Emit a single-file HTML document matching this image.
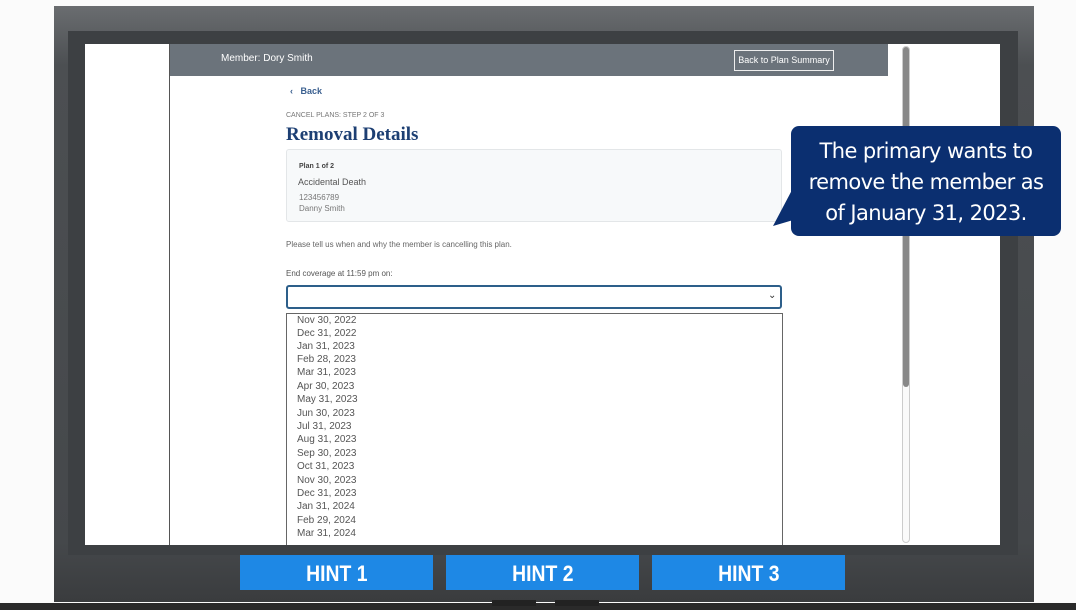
<!DOCTYPE html>
<html><head><style>
*{margin:0;padding:0;box-sizing:border-box}
body{width:1076px;height:610px;overflow:hidden;background:#fbfbfb;font-family:"Liberation Sans",sans-serif;position:relative}
.abs{position:absolute}
.frame{left:54px;top:6px;width:980px;height:596px;background:linear-gradient(#6a6d70,#4c4f52 10%,#45484b 90%,#3a3c3e);}
.bezel{left:68px;top:31px;width:950px;height:524px;background:#3d4043}
.screen{left:85px;top:44px;width:915px;height:501px;background:#fff}
.item{position:absolute;left:297px;font-size:10px;color:#555}
.hint{top:555px;width:193px;height:35px;background:#1e88e5;color:#fff;font-weight:bold;font-size:22px;text-align:center;line-height:37px}
.hint span{display:inline-block;transform:scaleX(.88)}
</style></head><body>
<div class="abs frame"></div>
<div class="abs bezel"></div>
<div class="abs screen"></div>
<div class="abs" style="left:169px;top:44px;width:1px;height:501px;background:#555"></div>
<div class="abs" style="left:170px;top:44px;width:718px;height:32px;background:#6b737b"></div>
<div class="abs" style="left:221px;top:53px;color:#fff;font-size:10px">Member: Dory Smith</div>
<div class="abs" style="left:734px;top:50px;width:100px;height:21px;border:1px solid #eee;color:#fff;font-size:9px;text-align:center;line-height:19px">Back to Plan Summary</div>
<div class="abs" style="left:902px;top:46px;width:8px;height:497px;border:1px solid #ccc;border-radius:4px;background:#fafafa"></div>
<div class="abs" style="left:903px;top:47px;width:6px;height:340px;background:#888;border-radius:3px"></div>
<div class="abs" style="left:290px;top:86px;color:#3a5f8f;font-size:9px;font-weight:bold">‹ &nbsp; Back</div>
<div class="abs" style="left:286px;top:112px;color:#777;font-size:7px">CANCEL PLANS: STEP 2 OF 3</div>
<div class="abs" style="left:286px;top:124px;color:#1d3f73;font-size:19px;font-weight:bold;font-family:'Liberation Serif',serif">Removal Details</div>
<div class="abs" style="left:286px;top:149px;width:496px;height:73px;background:#f7f9fa;border:1px solid #e3e6e8;border-radius:3px"></div>
<div class="abs" style="left:299px;top:163px;font-size:7px;color:#444;font-weight:bold">Plan 1 of 2</div>
<div class="abs" style="left:298px;top:177px;font-size:9px;color:#555">Accidental Death</div>
<div class="abs" style="left:299px;top:193px;font-size:8px;color:#777">123456789</div>
<div class="abs" style="left:299px;top:204px;font-size:8px;color:#777">Danny Smith</div>
<div class="abs" style="left:286px;top:240px;font-size:8px;color:#666">Please tell us when and why the member is cancelling this plan.</div>
<div class="abs" style="left:286px;top:269px;font-size:8px;color:#555">End coverage at 11:59 pm on:</div>
<div class="abs" style="left:286px;top:285px;width:496px;height:24px;border:2px solid #2d5f8a;border-radius:3px"></div>
<div class="abs" style="left:768px;top:290px;font-size:10px;color:#333">⌄</div>
<div class="abs" style="left:286px;top:313px;width:497px;height:232px;border:1px solid #666;border-bottom:none"></div>
<div class="item" style="top:315px">Nov 30, 2022</div>
<div class="item" style="top:328px">Dec 31, 2022</div>
<div class="item" style="top:341px">Jan 31, 2023</div>
<div class="item" style="top:354px">Feb 28, 2023</div>
<div class="item" style="top:367px">Mar 31, 2023</div>
<div class="item" style="top:381px">Apr 30, 2023</div>
<div class="item" style="top:394px">May 31, 2023</div>
<div class="item" style="top:408px">Jun 30, 2023</div>
<div class="item" style="top:421px">Jul 31, 2023</div>
<div class="item" style="top:434px">Aug 31, 2023</div>
<div class="item" style="top:448px">Sep 30, 2023</div>
<div class="item" style="top:461px">Oct 31, 2023</div>
<div class="item" style="top:475px">Nov 30, 2023</div>
<div class="item" style="top:488px">Dec 31, 2023</div>
<div class="item" style="top:501px">Jan 31, 2024</div>
<div class="item" style="top:515px">Feb 29, 2024</div>
<div class="item" style="top:528px">Mar 31, 2024</div>
<svg class="abs" style="left:770px;top:190px" width="30" height="40"><polygon points="22,0 30,0 30,28 3,36" fill="#0b2f70"/></svg>
<div class="abs" style="left:791px;top:126px;width:270px;height:110px;background:#0b2f70;border-radius:8px;color:#fff;font-size:21px;text-align:center;line-height:31px;padding-top:10px;font-family:'DejaVu Sans',sans-serif;letter-spacing:-0.6px">The primary wants to<br>remove the member as<br>of January 31, 2023.</div>
<div class="abs hint" style="left:240px"><span>HINT 1</span></div>
<div class="abs hint" style="left:446px"><span>HINT 2</span></div>
<div class="abs hint" style="left:652px"><span>HINT 3</span></div>
<div class="abs" style="left:0;top:603px;width:1076px;height:7px;background:#2a2a2a"></div>
<div class="abs" style="left:492px;top:600px;width:44px;height:6px;background:#222"></div>
<div class="abs" style="left:555px;top:600px;width:44px;height:6px;background:#222"></div>
</body></html>
